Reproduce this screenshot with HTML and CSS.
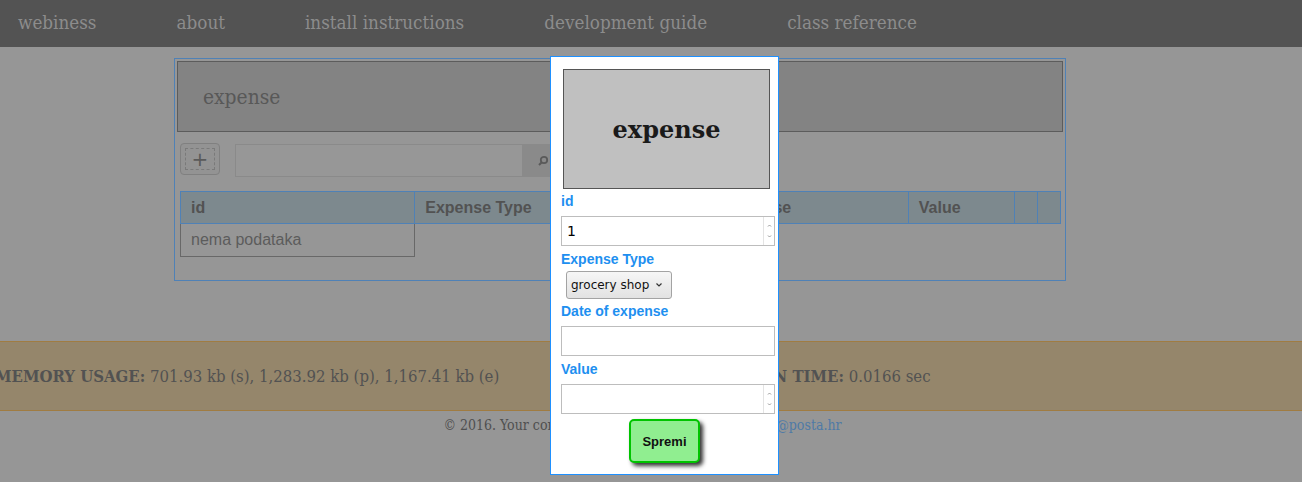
FILE: index.html
```html
<!DOCTYPE html>
<html lang="hr">
<head>
<meta charset="utf-8">
<title>expense</title>
<link rel="stylesheet" href="styles.css">
</head>
<body>
<nav class="topnav">
  <a class="nav-link">webiness</a>
  <a class="nav-link">about</a>
  <a class="nav-link">install instructions</a>
  <a class="nav-link">development guide</a>
  <a class="nav-link">class reference</a>
</nav>

<main class="content">
  <section class="panel">
    <div class="panel-title">expense</div>
    <div class="toolbar">
      <button class="add-btn"><span class="add-inner">+</span></button>
      <div class="search">
        <input class="search-input" type="text">
        <span class="search-btn">
          <svg width="12" height="12" viewBox="0 0 12 12"><circle cx="7" cy="5" r="3.2" fill="none" stroke="#5a5a5a" stroke-width="1.8"/><line x1="4.8" y1="7.2" x2="2" y2="10" stroke="#5a5a5a" stroke-width="2"/></svg>
        </span>
      </div>
    </div>
    <table class="grid">
      <thead>
        <tr>
          <th class="c-id">id</th>
          <th class="c-type">Expense Type</th>
          <th class="c-date">Date of expense</th>
          <th class="c-value">Value</th>
          <th class="c-act"></th>
          <th class="c-act"></th>
        </tr>
      </thead>
      <tbody>
        <tr><td class="empty">nema podataka</td></tr>
      </tbody>
    </table>
  </section>
</main>

<footer class="site-footer">
  <div class="stats">
    <span class="stat stat-mem"><b class="stat-key">MEMORY USAGE:</b> 701.93 kb (s), 1,283.92 kb (p), 1,167.41 kb (e)</span>
    <span class="stat stat-time"><b class="stat-key">EXECUTION TIME:</b> 0.0166 sec</span>
  </div>
  <p class="copy">© 2016. Your company. Contact: webiness <a class="mail">webiness@posta.hr</a></p>
</footer>

<div class="modal">
  <div class="modal-image">expense</div>
  <form class="modal-form">
    <label class="f-label f-first">id</label>
    <div class="f-field">
      <input class="f-control" type="text" value="1">
      <span class="spin"><svg width="9" height="28" viewBox="0 0 9 28"><path d="M3 9.5 L4.5 8 L6 9.5" fill="none" stroke="#9a9a9a" stroke-width="1"/><path d="M3 18.5 L4.5 20 L6 18.5" fill="none" stroke="#9a9a9a" stroke-width="1"/></svg></span>
    </div>
    <label class="f-label f-sel-label">Expense Type</label>
    <div class="select-wrap">
      <select class="f-select"><option>grocery shop</option></select>
      <svg class="chev" width="8" height="6" viewBox="0 0 8 6"><path d="M1.5 1.5 L4 4 L6.5 1.5" fill="none" stroke="#333" stroke-width="1.2"/></svg>
    </div>
    <label class="f-label f-after-sel">Date of expense</label>
    <div class="f-field">
      <input class="f-control" type="text">
    </div>
    <label class="f-label">Value</label>
    <div class="f-field">
      <input class="f-control" type="text">
      <span class="spin"><svg width="9" height="28" viewBox="0 0 9 28"><path d="M3 9.5 L4.5 8 L6 9.5" fill="none" stroke="#9a9a9a" stroke-width="1"/><path d="M3 18.5 L4.5 20 L6 18.5" fill="none" stroke="#9a9a9a" stroke-width="1"/></svg></span>
    </div>
    <div class="f-actions"><button type="button" class="save-btn">Spremi</button></div>
  </form>
</div>
</body>
</html>
```
FILE: styles.css
```css
html, body {
  margin: 0;
  padding: 0;
}
body {
  background: #969696;
  font-family: "DejaVu Serif", serif;
  width: 1302px;
  height: 482px;
  overflow: hidden;
  position: relative;
}

.topnav {
  height: 47px;
  background: #535353;
  display: flex;
  align-items: center;
  padding-left: 18px;
  gap: 80px;
}
.nav-link {
  color: #8c8c8c;
  font-family: "DejaVu Serif", serif;
  font-stretch: condensed;
  font-size: 18.7px;
  line-height: 22px;
  margin-top: -2px;
}

.content {
  padding-top: 11px;
  padding-left: 174px;
}
.panel {
  width: 886px;
  height: 217px;
  border: 1px solid #4f81b6;
  padding: 2px;
}
.panel-title {
  height: 69px;
  background: #838383;
  border: 1px solid #5c5c5c;
  color: #585858;
  font-family: "DejaVu Serif", serif;
  font-stretch: condensed;
  font-size: 20.8px;
  display: flex;
  align-items: center;
  padding-left: 25px;
}
.toolbar {
  display: flex;
  align-items: flex-start;
  margin-top: 11px;
  padding-left: 3px;
  gap: 15px;
}
.add-btn {
  width: 40px;
  height: 32px;
  border: 1px solid #808080;
  border-radius: 4px;
  background: #939393;
  padding: 4px;
  margin: 0;
  display: flex;
}
.add-inner {
  flex: 1;
  border: 1px dashed #7a7a7a;
  color: #5a5a5a;
  font-family: "DejaVu Sans", sans-serif;
  font-size: 20px;
  line-height: 20px;
  display: flex;
  align-items: center;
  justify-content: center;
}
.search {
  display: flex;
  margin-top: 1px;
}
.search-input {
  width: 288px;
  height: 33px;
  box-sizing: border-box;
  border: 1px solid #8a8a8a;
  background: #979797;
  margin: 0;
}
.search-btn {
  width: 40px;
  height: 33px;
  background: #8a8a8a;
  display: flex;
  align-items: center;
  justify-content: center;
}

.grid {
  margin-top: 14px;
  margin-left: 3px;
  width: 881px;
  border-collapse: collapse;
  font-family: "Liberation Sans", Arial, sans-serif;
  font-size: 16px;
}
.grid th {
  height: 31px;
  padding: 0 0 0 10px;
  background: #7d898e;
  border: 1px solid #4f81b6;
  color: #525252;
  text-align: left;
  font-weight: bold;
}
.c-id { width: 223px; }
.c-type { width: 232px; }
.c-date { width: 239px; }
.c-value { width: 95px; }
.c-act { width: 12px; }
.grid td.empty {
  height: 32px;
  padding: 0 0 0 10px;
  border: 1px solid #686868;
  color: #5c5c5c;
}

.site-footer {
  margin-top: 60px;
}
.stats {
  height: 68px;
  background: #95866b;
  border-top: 1px solid #a07c42;
  border-bottom: 1px solid #a07c42;
  display: flex;
  align-items: center;
  gap: 184px;
  color: #525252;
  white-space: nowrap;
  overflow: hidden;
  font-family: "DejaVu Serif", serif;
  font-stretch: condensed;
  font-size: 16.6px;
}
.stat-mem {
  margin-left: -5px;
}
.stat-key {
  font-weight: bold;
}
.copy {
  margin: 6px 0 0;
  text-align: center;
  color: #4f4f4f;
  font-family: "DejaVu Serif", serif;
  font-stretch: condensed;
  font-size: 14px;
  line-height: 16px;
  padding-right: 17px;
}
.mail {
  color: #4f7aa6;
}

.modal {
  position: absolute;
  left: 550px;
  top: 56px;
  width: 227px;
  height: 417px;
  background: #fff;
  border: 1px solid #1e90ff;
}
.modal-image {
  margin: 12px 0 0 12px;
  width: 205px;
  height: 118px;
  background: #c0c0c0;
  border: 1px solid #555;
  display: flex;
  align-items: center;
  justify-content: center;
  font-family: "DejaVu Serif", serif;
  font-weight: bold;
  font-size: 24px;
  color: #1a1a1a;
}
.modal-form {
  display: flex;
  flex-direction: column;
  align-items: flex-start;
  padding-left: 10px;
  font-family: "Liberation Sans", Arial, sans-serif;
}
.f-label {
  display: block;
  color: #1e8ff0;
  font-weight: bold;
  font-size: 14px;
  line-height: 16px;
  margin: 5px 0 7px 0;
}
.f-first {
  margin-top: 4px;
}
.f-sel-label {
  margin-bottom: 4px;
}
.f-after-sel {
  margin-top: 4px;
}
.f-field {
  width: 214px;
  height: 30px;
  box-sizing: border-box;
  border: 1px solid #bdbdbd;
  display: flex;
  background: #fff;
}
.f-control {
  flex: 1;
  min-width: 0;
  border: none;
  outline: none;
  margin: 0;
  padding: 0 5px;
  font-family: "DejaVu Sans", sans-serif;
  font-size: 14px;
  background: transparent;
}
.spin {
  width: 10px;
  border-left: 1px solid #e4e4e4;
  display: flex;
  align-items: center;
  justify-content: center;
}
.select-wrap {
  position: relative;
  margin-left: 5px;
}
.f-select {
  appearance: none;
  -webkit-appearance: none;
  display: block;
  height: 28px;
  width: 106px;
  margin: 0;
  padding: 0 0 0 4px;
  border: 1px solid #a3a3a3;
  border-radius: 3px;
  background: linear-gradient(#f6f6f6, #e2e2e2);
  font-family: "DejaVu Sans", sans-serif;
  font-size: 12px;
  color: #111;
}
.chev {
  position: absolute;
  right: 9px;
  top: 11px;
}
.f-actions {
  width: 214px;
  display: flex;
  justify-content: center;
  margin-top: 5px;
}
.save-btn {
  width: 71px;
  height: 44px;
  background: #90ee90;
  border: 2px solid #00c400;
  border-radius: 5px;
  box-shadow: 3px 3px 4px #333;
  font-family: "Liberation Sans", Arial, sans-serif;
  font-weight: bold;
  font-size: 13px;
  color: #111;
  margin-right: 7px;
}
```
